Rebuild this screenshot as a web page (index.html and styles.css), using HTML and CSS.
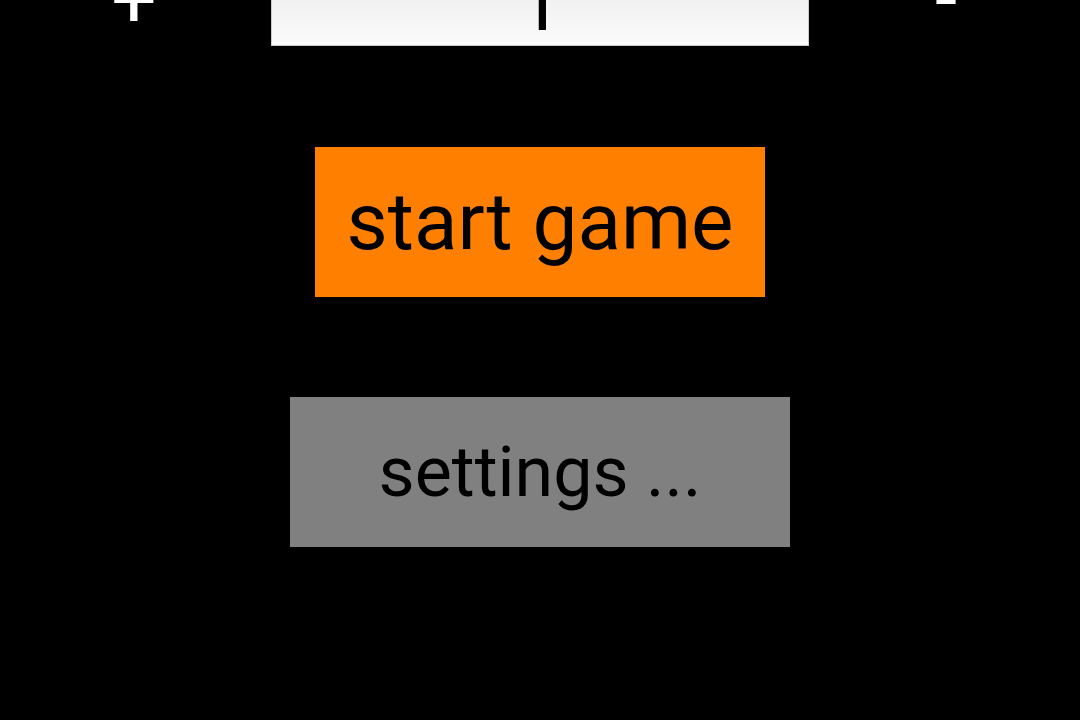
FILE: index.html
```html
<!DOCTYPE html>
<html lang="en">
<head>
<meta charset="UTF-8">
<meta name="viewport" content="width=device-width, initial-scale=1.0">
<title>Game Menu</title>
<link rel="stylesheet" href="styles.css">
</head>
<body>

<div class="menu">
<!-- Level stepper (scrolled partly off the top) -->
<div class="stepper">
<span class="step">+</span>
<div class="value">1</div>
<span class="step minus">-</span>
</div>

<!-- Main buttons -->
<button type="button" class="btn start">start game</button>
<button type="button" class="btn settings">settings ...</button>
</div>

</body>
</html>
```
FILE: styles.css
```css
/* General styling */
html, body {
    margin: 0;
    padding: 0;
    background: #000;
    height: 100%;
    overflow: hidden;
}

body {
    font-family: Roboto, "Liberation Sans", sans-serif;
}

.menu {
    display: flex;
    flex-direction: column;
    align-items: center;
}

/* Stepper */
.stepper {
    display: flex;
    align-items: flex-end;
    gap: 92px;
    height: 113px;
    margin-top: -67px;
}

.step {
    width: 90px;
    text-align: center;
    color: #fff;
    font-size: 80px;
    line-height: 94px;
    margin-bottom: -1px;
}

.step.minus {
    margin-bottom: 1px;
}

.value {
    width: 536px;
    height: 93px;
    border: 1px solid #c8c8c8;
    background: linear-gradient(to bottom, #e6e6e6, #fbfbfb);
    color: #000;
    font-size: 80px;
    line-height: 102px;
    text-align: center;
    overflow: hidden;
}

/* Buttons */
.btn {
    height: 150px;
    border: none;
    border-radius: 0;
    padding: 0;
    font-family: Roboto, "Liberation Sans", sans-serif;
    font-size: 80px;
    color: #000;
    cursor: pointer;
}

.start {
    width: 450px;
    background: #ff8000;
    margin-top: 101px;
}

.settings {
    width: 500px;
    background: #808080;
    margin-top: 100px;
    font-size: 70px;
}
```
